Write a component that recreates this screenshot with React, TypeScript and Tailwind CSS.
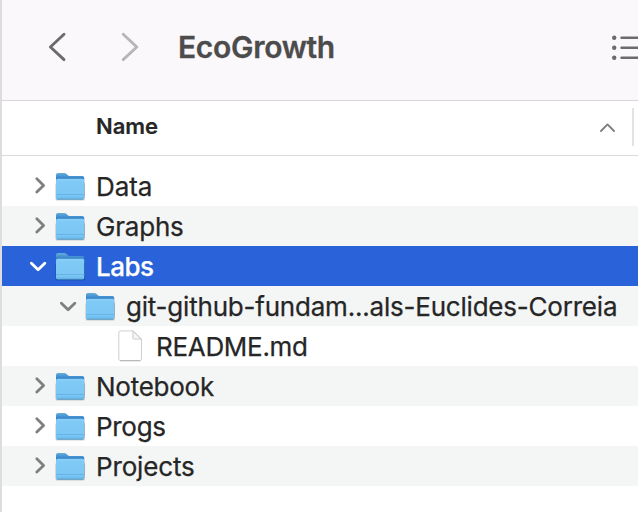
type Chevron = "right" | "down" | "none";

interface Row {
  name: string;
  icon: "folder" | "file";
  chevron: Chevron;
  indent: string;
  tone: string;
  tracking: string;
}

const rows: Row[] = [
  { name: "Data", icon: "folder", chevron: "right", indent: "pl-[28px]", tone: "bg-white text-[#262626]", tracking: "tracking-[-0.1px]" },
  { name: "Graphs", icon: "folder", chevron: "right", indent: "pl-[28px]", tone: "bg-[#f4f5f5] text-[#262626]", tracking: "tracking-[-0.2px]" },
  { name: "Labs", icon: "folder", chevron: "down", indent: "pl-[28px]", tone: "bg-[#2962d9] text-white", tracking: "font-medium tracking-[-0.5px]" },
  { name: "git-github-fundam...als-Euclides-Correia", icon: "folder", chevron: "down", indent: "pl-[58px]", tone: "bg-[#f4f5f5] text-[#262626]", tracking: "tracking-[-0.21px]" },
  { name: "README.md", icon: "file", chevron: "none", indent: "pl-[88px]", tone: "bg-white text-[#262626]", tracking: "tracking-[-0.3px]" },
  { name: "Notebook", icon: "folder", chevron: "right", indent: "pl-[28px]", tone: "bg-[#f4f5f5] text-[#262626]", tracking: "tracking-[-0.25px]" },
  { name: "Progs", icon: "folder", chevron: "right", indent: "pl-[28px]", tone: "bg-white text-[#262626]", tracking: "tracking-[-0.3px]" },
  { name: "Projects", icon: "folder", chevron: "right", indent: "pl-[28px]", tone: "bg-[#f4f5f5] text-[#262626]", tracking: "tracking-[-0.15px]" },
];

function Disclosure({ kind, selected }: { kind: Chevron; selected: boolean }) {
  return (
    <svg width="24" height="40" viewBox="0 0 24 40" fill="none" stroke={selected ? "#fff" : "#7f7f80"} strokeWidth="2.8" strokeLinecap="round" strokeLinejoin="round" className="shrink-0">
      {kind === "right" && <path d="M6.8 12.8 13.6 19.4 6.8 26" />}
      {kind === "down" && <path d="M1.4 17.2 8.1 23.8 14.8 17.2" />}
    </svg>
  );
}

function Folder() {
  return (
    <svg width="32" height="40" viewBox="0 0 32 40" className="shrink-0">
      <defs>
        <linearGradient id="back" gradientUnits="userSpaceOnUse" x1="0" y1="7" x2="0" y2="14">
          <stop offset="0" stopColor="#66aeda" />
          <stop offset="0.5" stopColor="#4692cf" />
          <stop offset="1" stopColor="#2b74c3" />
        </linearGradient>
        <linearGradient id="front" x1="0" y1="0" x2="0" y2="1">
          <stop offset="0" stopColor="#8bd0f9" />
          <stop offset="0.15" stopColor="#80c9f6" />
          <stop offset="1" stopColor="#7ac6f5" />
        </linearGradient>
      </defs>
      <rect x="1.4" y="16" width="29.6" height="18.7" rx="2" fill="#000" opacity="0.12" />
      <rect x="1.8" y="16" width="28.8" height="18.1" rx="2" fill="#000" opacity="0.24" />
      <path d="M2 8.8Q2 6.9 3.9 6.9H10.2Q11.6 6.9 12.6 8L13.8 9.2Q14.6 9.9 15.6 9.9H28.4Q30.2 9.9 30.2 11.7V30H2Z" fill="url(#back)" />
      <rect x="2" y="12.8" width="28.2" height="20.5" rx="1.6" fill="url(#front)" />
      <path d="M2 28.5H30.2" stroke="#62b2e1" strokeWidth="0.9" />
      <path d="M2.2 31.2H30" stroke="#6bb9e8" strokeWidth="0.8" />
      <path d="M3.2 33H29" stroke="#4b9ed4" strokeWidth="0.9" />
    </svg>
  );
}

function Doc() {
  return (
    <svg width="32" height="40" viewBox="0 0 32 40" className="shrink-0">
      <path d="M6.4 4.9H18.6Q19.4 4.9 20 5.5L26.9 12.4Q27.5 13 27.5 13.8V32.9Q27.5 34.5 25.9 34.5H6.4Q4.8 34.5 4.8 32.9V6.5Q4.8 4.9 6.4 4.9Z" fill="#fff" stroke="#cacaca" strokeWidth="0.9" />
      <path d="M6 34.8H26.4" stroke="#aaa" strokeWidth="0.8" />
      <path d="M18.9 5.1V12Q18.9 13.1 20 13.1H27.2Z" fill="#f5f5f5" stroke="#c0c0c0" strokeWidth="0.8" />
    </svg>
  );
}

export default function App() {
  return (
    <div className="h-[512px] w-[638px] overflow-hidden border-l-2 border-[#dedcdf] bg-white font-['Inter',sans-serif]">
      <header className="flex h-[101px] items-start border-b border-[#d8d6d9] bg-[#faf8fb]">
        <svg width="176" height="100" viewBox="2 0 176 100" fill="none" strokeWidth="2.9" strokeLinecap="round" strokeLinejoin="round" className="shrink-0">
          <path d="M64 34.2 50.4 47 64 59.6" stroke="#6c6a6d" />
          <path d="M123.2 34.2 136.8 47 123.2 59.6" stroke="#b7b5b8" />
        </svg>
        <h1 className="mt-[27px] flex-1 whitespace-nowrap text-[30px] leading-[40px] font-semibold tracking-[-0.3px] text-[#4c4c4c] [-webkit-text-stroke:0.3px_#4c4c4c]">EcoGrowth</h1>
        <svg width="28" height="100" viewBox="610 0 28 100" fill="#6c6a6d" stroke="#6c6a6d" className="shrink-0">
          {[37.8, 47.8, 57.8].map((y) => (
            <g key={y}>
              <circle cx="614.2" cy={y} r="2.2" stroke="none" />
              <path d={`M621.6 ${y}H640`} strokeWidth="2.6" strokeLinecap="round" />
            </g>
          ))}
        </svg>
      </header>
      <div className="flex h-[55px] items-start border-b border-[#d9d9d9] bg-white">
        <span className="mt-[10px] ml-[94px] flex-1 text-[22px] leading-[30px] font-semibold tracking-[-0.05px] text-[#262626] [-webkit-text-stroke:0.2px_#262626]">Name</span>
        <svg width="34" height="54" viewBox="598 101 34 54" fill="none" className="shrink-0">
          <path d="M601 131 607.5 124.4 614 131" stroke="#7f7f80" strokeWidth="1.9" strokeLinecap="round" strokeLinejoin="round" />
        </svg>
        <div className="mt-[7px] mr-[4px] h-[38px] w-[2px] bg-[#e3e3e3]" />
      </div>
      <main className="pt-[10px]">
        {rows.map((row) => (
          <div key={row.name} className={`flex h-[40px] items-center ${row.indent} ${row.tone}`}>
            <Disclosure kind={row.chevron} selected={row.name === "Labs"} />
            {row.icon === "folder" ? <Folder /> : <Doc />}
            <span className={`ml-[10px] pt-[2px] whitespace-nowrap text-[26px] leading-[40px] [-webkit-text-stroke:0.25px_currentColor] ${row.tracking}`}>{row.name}</span>
          </div>
        ))}
      </main>
    </div>
  );
}
